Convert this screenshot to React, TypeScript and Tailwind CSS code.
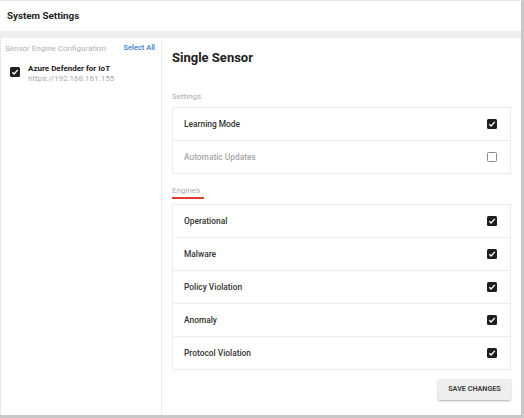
import React from "react";

function Check({ on }: { on: boolean }) {
  if (!on)
    return (
      <div className="w-[10px] h-[10px] rounded-[1.5px] border border-[#8a8a8a] bg-white" />
    );
  return (
    <div className="w-[10px] h-[10px] rounded-[1.5px] bg-[#1e1e1e] flex items-center justify-center">
      <svg width="8" height="8" viewBox="0 0 8 8">
        <path d="M1.3 4.2 L3.1 6 L6.8 1.9" stroke="#fff" strokeWidth="1.4" fill="none" />
      </svg>
    </div>
  );
}

function Row({ label, on, dim, h }: { label: string; on: boolean; dim?: boolean; h: string }) {
  return (
    <div className={h + " flex items-center justify-between pl-[11px] pr-[13px] bg-white"}>
      <span className={"text-[8.4px] font-medium " + (dim ? "text-[#a8a8a8]" : "text-[#333]")}>{label}</span>
      <Check on={on} />
    </div>
  );
}

export default function App() {
  const engines = ["Operational", "Malware", "Policy Violation", "Anomaly", "Protocol Violation"];
  return (
    <div
      className="w-[524px] h-[418px] bg-white flex flex-col overflow-hidden border-t border-[#e6e6e6] border-r-[3px] border-r-[#c8c8c8] border-b-[3px] border-b-[#c8c8c8]"
      style={{ fontFamily: "Roboto, 'Liberation Sans', sans-serif" }}
    >
      <div className="h-[30px] flex items-center pl-[7px] shrink-0">
        <span className="text-[9.8px] font-bold text-[#222]">System Settings</span>
      </div>
      <div className="h-[7px] bg-[#efefef] shrink-0" />
      <div className="flex flex-1 min-h-0">
        <div className="w-[162px] border-l border-[#e8e8e8] border-r border-r-[#ececec] shrink-0 pt-[4px]">
          <div className="flex justify-between items-center pl-[4px] pr-[6px] h-[14px]">
            <span className="text-[8px] text-[#b0b0b0]">Sensor Engine Configuration</span>
            <span className="text-[7.5px] text-[#3b7bbf] font-medium -mt-[3px]">Select All</span>
          </div>
          <div className="flex items-start pl-[9px] mt-[8px] gap-[8px]">
            <div className="mt-[3px]">
              <Check on={true} />
            </div>
            <div className="flex flex-col leading-[10px]">
              <span className="text-[8px] font-bold text-[#222]">Azure Defender for IoT</span>
              <span className="text-[8px] text-[#aaa]">https://192.168.161.155</span>
            </div>
          </div>
        </div>
        <div className="flex-1 pl-[10px] pr-[10px] flex flex-col">
          <div className="text-[13px] font-bold text-[#222] mt-[12px] leading-[16px]">Single Sensor</div>
          <div className="text-[8px] text-[#aaa] mt-[25px] leading-[12px]">Settings</div>
          <div className="mt-[4px] border border-[#ececec] flex flex-col">
            <Row label="Learning Mode" on={true} h="h-[32px]" />
            <div className="h-px bg-[#ececec]" />
            <Row label="Automatic Updates" on={false} dim h="h-[32px]" />
          </div>
          <div className="mt-[11px] self-start">
            <div className="text-[8px] text-[#aaa] leading-[12px]">Engines</div>
            <div className="h-[2px] bg-[#e53935] w-[32px]" />
          </div>
          <div className="mt-[5px] flex flex-col gap-[1px] bg-[#eeeeee] border border-[#ececec]">
            {engines.map((e) => (
              <Row key={e} label={e} on={true} h="h-[32px]" />
            ))}
          </div>
          <div className="flex justify-end mt-[9px]">
            <button className="h-[21px] w-[73px] bg-[#eeeeee] text-[7.2px] font-bold text-[#444] shadow-[0_1px_2px_rgba(0,0,0,0.3)] rounded-[2px]">
              SAVE CHANGES
            </button>
          </div>
        </div>
      </div>
    </div>
  );
}
